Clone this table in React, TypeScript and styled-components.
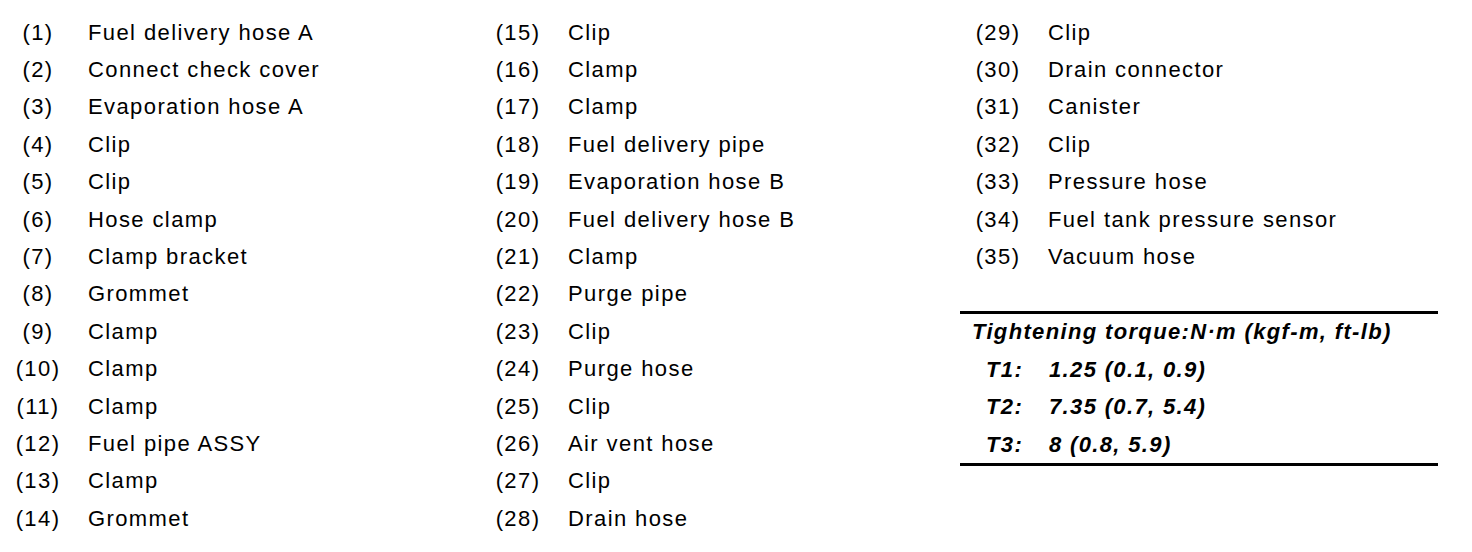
import React from 'react';
import styled, { createGlobalStyle } from 'styled-components';

interface Part {
    no: number;
    name: string;
}

const parts: string[] = [
    'Fuel delivery hose A',
    'Connect check cover',
    'Evaporation hose A',
    'Clip',
    'Clip',
    'Hose clamp',
    'Clamp bracket',
    'Grommet',
    'Clamp',
    'Clamp',
    'Clamp',
    'Fuel pipe ASSY',
    'Clamp',
    'Grommet',
    'Clip',
    'Clamp',
    'Clamp',
    'Fuel delivery pipe',
    'Evaporation hose B',
    'Fuel delivery hose B',
    'Clamp',
    'Purge pipe',
    'Clip',
    'Purge hose',
    'Clip',
    'Air vent hose',
    'Clip',
    'Drain hose',
    'Clip',
    'Drain connector',
    'Canister',
    'Clip',
    'Pressure hose',
    'Fuel tank pressure sensor',
    'Vacuum hose',
];

const torques = [
    { key: 'T1', value: '1.25 (0.1, 0.9)' },
    { key: 'T2', value: '7.35 (0.7, 5.4)' },
    { key: 'T3', value: '8 (0.8, 5.9)' },
];

const GlobalStyle = createGlobalStyle`
  body {
    margin: 0;
    background: #ffffff;
    color: #000000;
    font-family: "Liberation Sans", Arial, sans-serif;
  }
`;

const Page = styled.div`
  display: grid;
  grid-template-columns: 480px 480px 480px;
  padding-top: 14px;
  width: 1472px;
`;

const Column = styled.div`
  display: flex;
  flex-direction: column;
`;

const Row = styled.div`
  display: flex;
  align-items: center;
  height: 37.4px;
  font-size: 22px;
  letter-spacing: 1.4px;
`;

const Num = styled.span`
  width: 76px;
  text-align: center;
  flex-shrink: 0;
`;

const Name = styled.span`
  margin-left: 12px;
  white-space: nowrap;
`;

const TorqueBox = styled.div`
  margin-top: 35px;
  width: 478px;
  border-top: 3px solid #000;
  border-bottom: 3px solid #000;
  font-weight: bold;
  font-style: italic;
  font-size: 22px;
  letter-spacing: 1.35px;
`;

const TorqueRow = styled.div<{ indent?: boolean }>`
  display: flex;
  align-items: center;
  height: 37.4px;
  padding-left: ${({ indent }) => (indent ? '26px' : '12px')};
  white-space: nowrap;
`;

const TorqueKey = styled.span`
  width: 63px;
  flex-shrink: 0;
`;

const PartList: React.FC<{ items: Part[] }> = ({ items }) => (
    <>
        {items.map((p) => (
            <Row key={p.no}>
                <Num>({p.no})</Num>
                <Name>{p.name}</Name>
            </Row>
        ))}
    </>
);

export default function App() {
    const all: Part[] = parts.map((name, i) => ({ no: i + 1, name }));

    return (
        <>
            <GlobalStyle />
            <Page>
                <Column>
                    <PartList items={all.slice(0, 14)} />
                </Column>
                <Column>
                    <PartList items={all.slice(14, 28)} />
                </Column>
                <Column>
                    <PartList items={all.slice(28)} />
                    <TorqueBox>
                        <TorqueRow>Tightening torque:N·m (kgf-m, ft-lb)</TorqueRow>
                        {torques.map((t) => (
                            <TorqueRow indent key={t.key}>
                                <TorqueKey>{t.key}:</TorqueKey>
                                {t.value}
                            </TorqueRow>
                        ))}
                    </TorqueBox>
                </Column>
            </Page>
        </>
    );
}
